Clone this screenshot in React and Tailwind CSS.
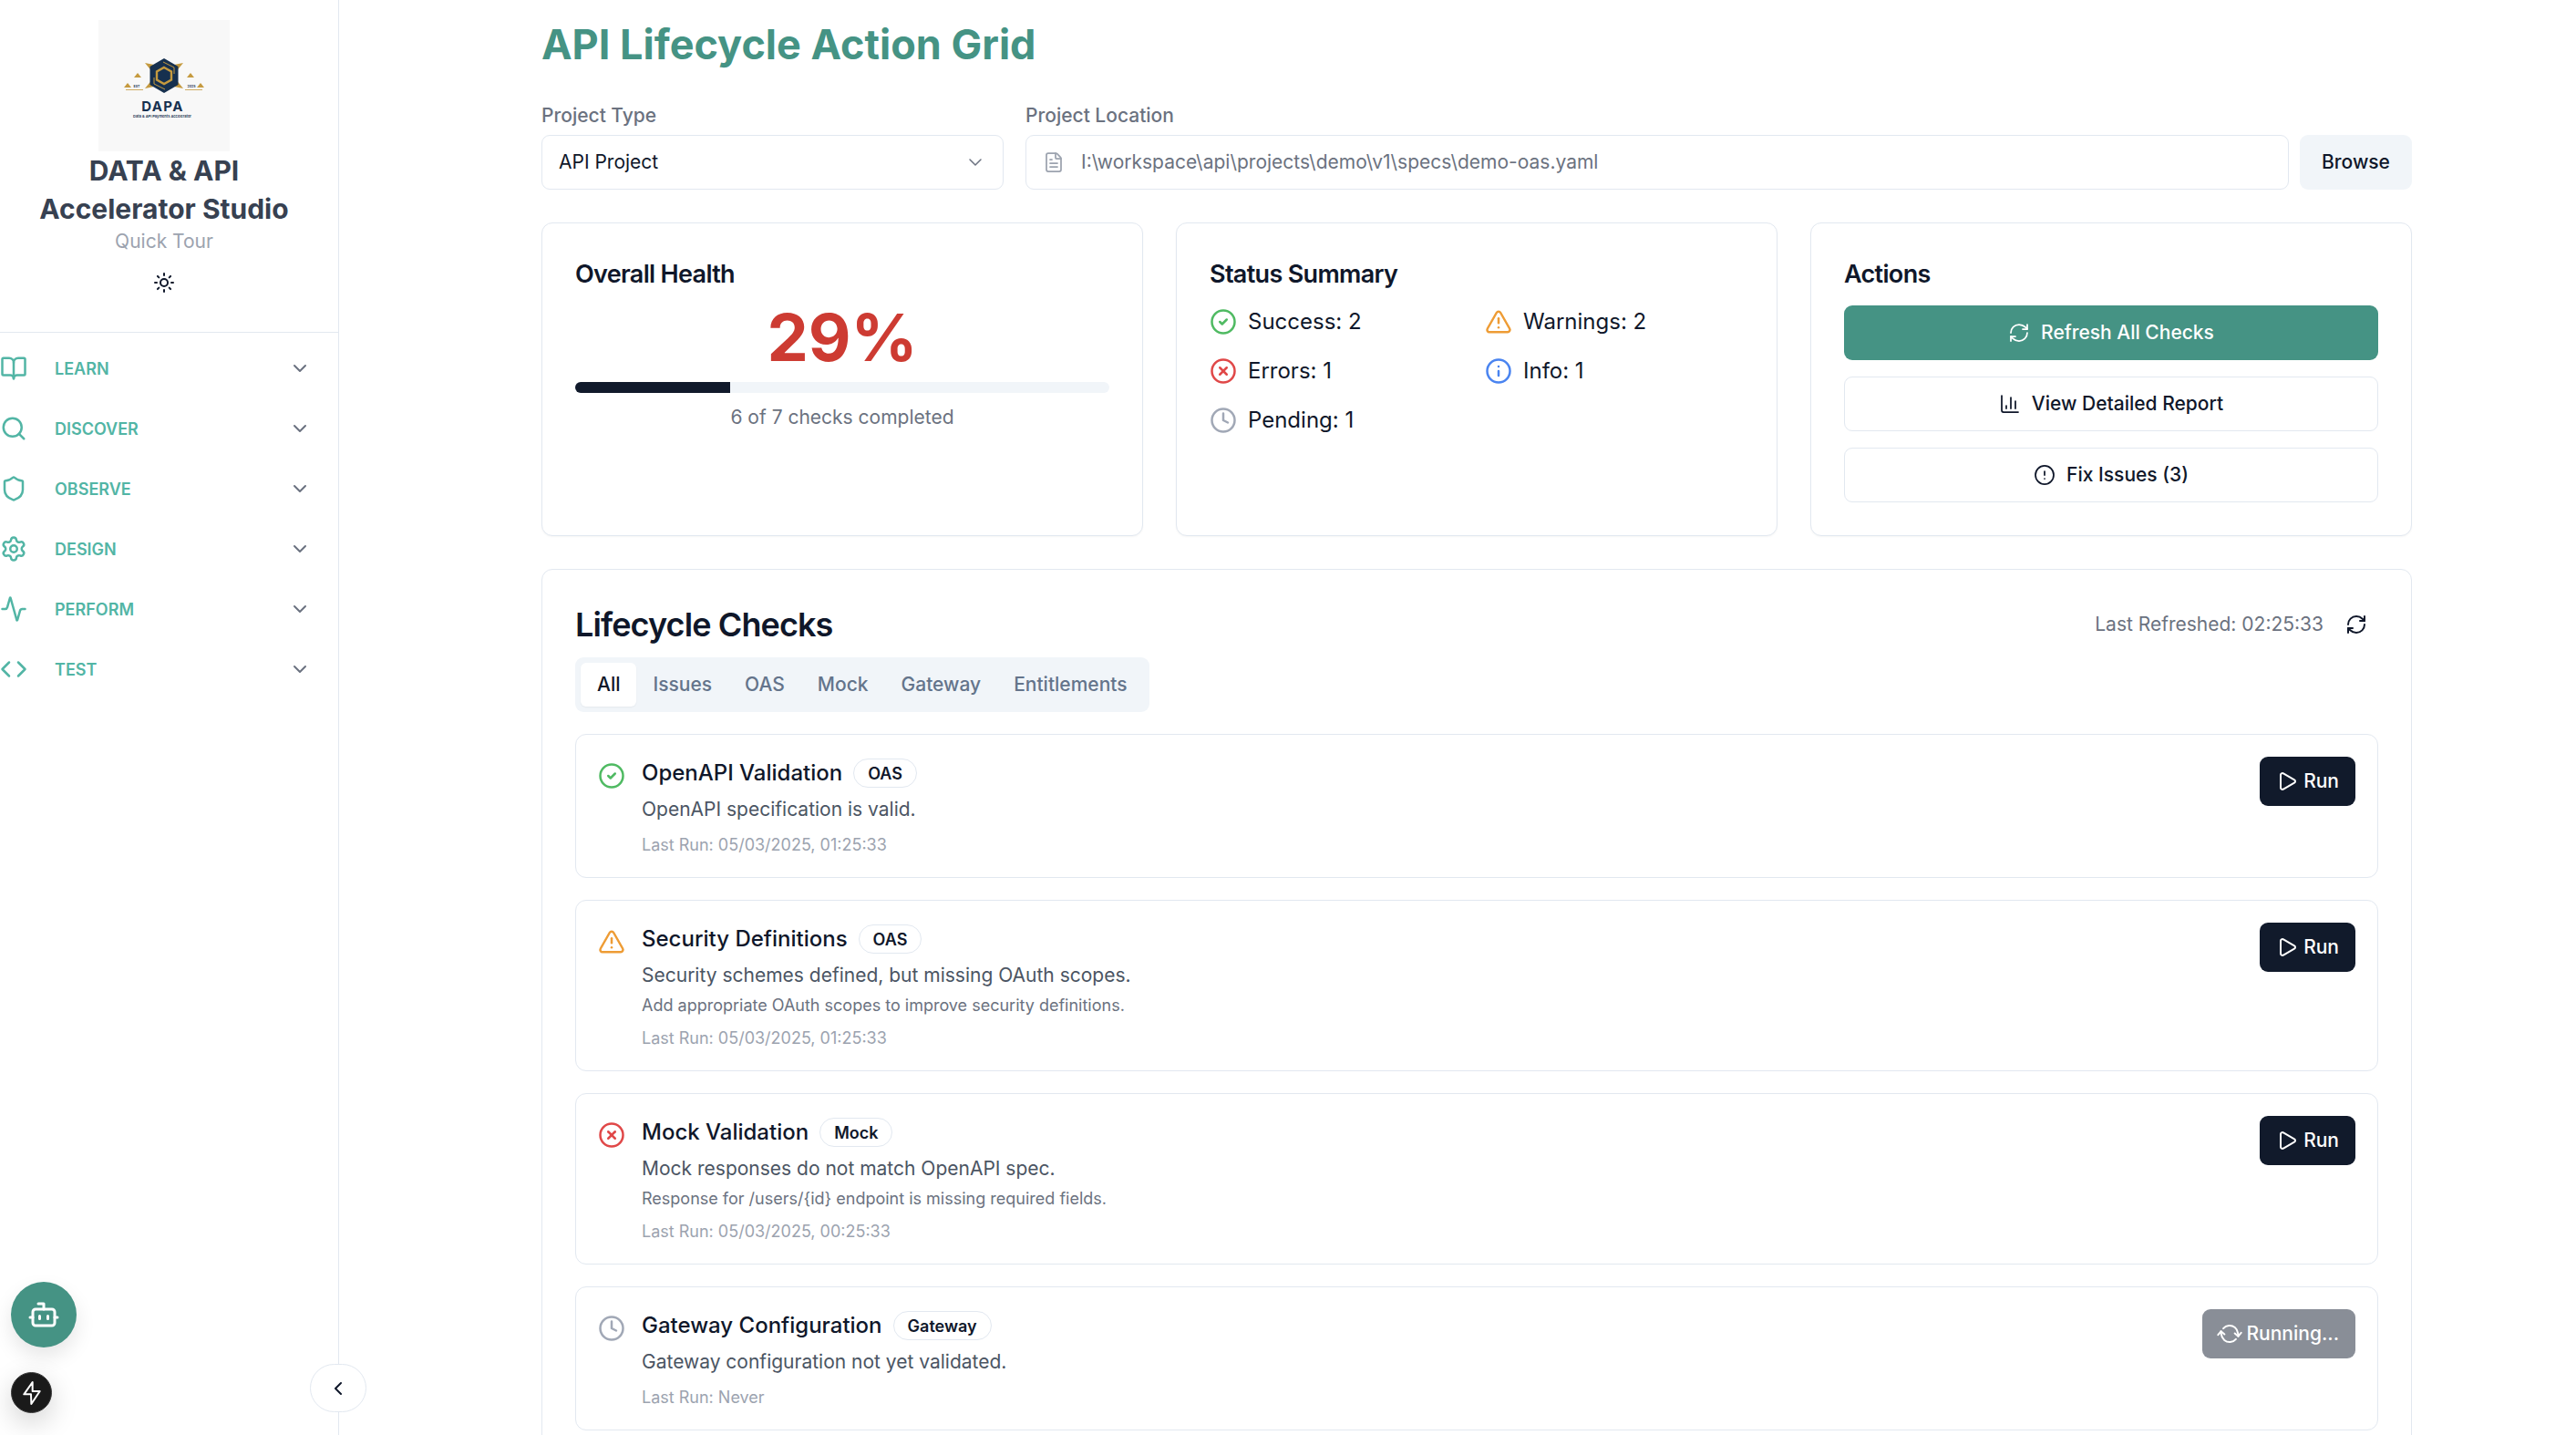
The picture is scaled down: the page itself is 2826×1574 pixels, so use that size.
import {
  Activity,
  BookOpen,
  Bot,
  ChartColumn,
  ChevronDown,
  ChevronLeft,
  CircleAlert,
  CircleCheck,
  CircleX,
  Clock,
  Code,
  FileText,
  Info,
  Play,
  RefreshCw,
  Search,
  Settings,
  Shield,
  Sun,
  TriangleAlert,
} from 'lucide-react';

const navItems = [
  { label: 'LEARN', icon: BookOpen },
  { label: 'DISCOVER', icon: Search },
  { label: 'OBSERVE', icon: Shield },
  { label: 'DESIGN', icon: Settings },
  { label: 'PERFORM', icon: Activity },
  { label: 'TEST', icon: Code },
];

const checks = [
  {
    title: 'OpenAPI Validation',
    tag: 'OAS',
    icon: CircleCheck,
    color: 'text-[#4fba62]',
    message: 'OpenAPI specification is valid.',
    lastRun: 'Last Run: 05/03/2025, 01:25:33',
  },
  {
    title: 'Security Definitions',
    tag: 'OAS',
    icon: TriangleAlert,
    color: 'text-[#ee9c35]',
    message: 'Security schemes defined, but missing OAuth scopes.',
    detail: 'Add appropriate OAuth scopes to improve security definitions.',
    lastRun: 'Last Run: 05/03/2025, 01:25:33',
  },
  {
    title: 'Mock Validation',
    tag: 'Mock',
    icon: CircleX,
    color: 'text-[#e04848]',
    message: 'Mock responses do not match OpenAPI spec.',
    detail: 'Response for /users/{id} endpoint is missing required fields.',
    lastRun: 'Last Run: 05/03/2025, 00:25:33',
  },
  {
    title: 'Gateway Configuration',
    tag: 'Gateway',
    icon: Clock,
    color: 'text-[#a1a8b6]',
    message: 'Gateway configuration not yet validated.',
    lastRun: 'Last Run: Never',
    running: true,
  },
];

const tabs = ['All', 'Issues', 'OAS', 'Mock', 'Gateway', 'Entitlements'];

const Logo = () => (
  <svg viewBox="0 0 144 144" className="w-[144px] h-[144px] bg-[#f8f8f8] shrink-0">
    <g fill="#c59a3f">
      <polygon points="51,47 66,50 60,58" />
      <polygon points="93,47 78,50 84,58" />
      <polygon points="51,75 60,64 66,72" />
      <polygon points="93,75 84,64 78,72" />
      <polygon points="43,58 47,63 39,63" />
      <polygon points="101,58 105,63 97,63" />
      <polygon points="32,69 36,74 28,74" />
      <polygon points="112,69 116,74 108,74" />
      <rect x="30" y="76" width="19" height="0.8" />
      <rect x="95" y="76" width="19" height="0.8" />
    </g>
    <polygon points="72,42 87.5,51 87.5,71 72,80 56.5,71 56.5,51" fill="#16304f" />
    <polygon points="72,52 80,56.5 80,65.5 72,70 64,65.5 64,56.5" fill="none" stroke="#c59a3f" strokeWidth="2.4" />
    <path d="M71 46 L83 52 V59 M73 76 L61 70 V63" fill="none" stroke="#c59a3f" strokeWidth="1" />
    <text x="42" y="73.5" fontSize="3.6" fontWeight="600" textAnchor="middle" fill="#16304f">EST</text>
    <text x="102" y="73.5" fontSize="3.6" fontWeight="600" textAnchor="middle" fill="#16304f">2025</text>
    <text x="70.5" y="99.5" fontSize="15" fontWeight="700" letterSpacing="1.4" textAnchor="middle" fill="#16304f">DAPA</text>
    <text x="70" y="106.5" fontSize="4" fontWeight="600" textAnchor="middle" fill="#16304f">Data &amp; API Payments Accelerator</text>
  </svg>
);

const Sidebar = () => (
  <aside className="w-[372px] shrink-0 h-full border-r border-[#e2e8f0] bg-white">
    <div className="h-[365px] flex flex-col items-center pt-[22px] pr-[11px] border-b border-[#e2e8f0]">
      <Logo />
      <h2 className="text-[30px] leading-[42px] font-bold text-[#374151] text-center">
        DATA &amp; API
        <br />
        Accelerator Studio
      </h2>
      <p className="text-[21px] leading-[31.5px] text-[#9ca3af] -mt-[1px]">Quick Tour</p>
      <Sun size={24} className="text-[#0f172a] mt-[17px]" />
    </div>
    <nav className="pt-[6px]">
      {navItems.map((item) => (
        <div key={item.label} className="h-[66px] flex items-center pr-[30px]">
          <item.icon size={30} className="text-[#52b5a5] shrink-0" />
          <span className="ml-[30px] flex-1 text-[18px] font-semibold text-[#52b5a5]">{item.label}</span>
          <ChevronDown size={24} className="text-[#6b7280]" />
        </div>
      ))}
    </nav>
  </aside>
);

const Card = ({ title, children }) => (
  <div className="h-[344px] rounded-[12px] border border-[#e2e8f0] bg-white p-[36px] shadow-[0_1px_2px_rgba(0,0,0,0.04)]">
    <h3 className="text-[27px] leading-[40.5px] font-semibold tracking-tight text-[#0f172a]">{title}</h3>
    {children}
  </div>
);

const StatusRow = ({ icon: Icon, color, text }) => (
  <div className="flex items-center gap-[12px] h-[36px]">
    <Icon size={30} className={color} />
    <span className="text-[24px] text-[#0f172a]">{text}</span>
  </div>
);

const CheckRow = ({ check }) => (
  <div className="rounded-[12px] border border-[#e2e8f0] bg-white px-[24px] pt-[24px] pb-[22.5px] flex items-start gap-[18px]">
    <check.icon size={30} className={`${check.color} shrink-0 mt-[6px]`} />
    <div className="flex-1">
      <div className="flex items-center gap-[12px] h-[36px]">
        <span className="text-[24px] font-medium text-[#0f172a]">{check.title}</span>
        <span className="h-[32px] flex items-center rounded-full border border-[#e2e8f0] px-[15px] text-[18px] font-semibold text-[#0f172a]">
          {check.tag}
        </span>
      </div>
      <p className="mt-[6px] text-[21px] leading-[31.5px] text-[#4b5563]">{check.message}</p>
      {check.detail && <p className="mt-[3px] text-[18px] leading-[27px] text-[#6b7280]">{check.detail}</p>}
      <p className="mt-[9px] text-[18px] leading-[27px] text-[#9ca3af]">{check.lastRun}</p>
    </div>
    {check.running ? (
      <button className="h-[54px] px-[18px] flex items-center gap-[6px] rounded-[9px] bg-[#898e97] text-white text-[21px] font-medium">
        <RefreshCw size={24} className="rotate-[40deg]" />
        Running...
      </button>
    ) : (
      <button className="h-[54px] px-[18px] flex items-center gap-[6px] rounded-[9px] bg-[#111a2b] text-white text-[21px] font-medium">
        <Play size={24} />
        Run
      </button>
    )}
  </div>
);

export default function App() {
  return (
    <div className="relative h-screen flex overflow-hidden bg-white font-['Inter',sans-serif]">
      <Sidebar />

      <main className="flex-1 min-w-0 pl-[222px] pr-[180px] pt-[22px]">
        <h1 className="text-[45px] leading-[54px] font-bold text-[#459384]">API Lifecycle Action Grid</h1>

        <div className="mt-[35px] flex gap-[24px]">
          <div className="w-[507px] shrink-0">
            <label className="block text-[21px] leading-[31.5px] font-medium text-[#6b7280] mb-[5.5px]">Project Type</label>
            <div className="h-[60px] flex items-center justify-between rounded-[9px] border border-[#e2e8f0] px-[18px] text-[21px] text-[#0f172a]">
              API Project
              <ChevronDown size={24} className="text-[#6b7280]" strokeWidth={1.5} />
            </div>
          </div>
          <div className="flex-1">
            <label className="block text-[21px] leading-[31.5px] font-medium text-[#6b7280] mb-[5.5px]">Project Location</label>
            <div className="flex gap-[12px]">
              <div className="flex-1 h-[60px] flex items-center gap-[18px] rounded-[9px] border border-[#e2e8f0] px-[18px] text-[21px] text-[#6b7280]">
                <FileText size={24} className="text-[#9ca3af]" strokeWidth={1.75} />
                I:\workspace\api\projects\demo\v1\specs\demo-oas.yaml
              </div>
              <button className="w-[123px] h-[60px] rounded-[9px] bg-[#f1f5f9] text-[21px] font-medium text-[#0f172a]">Browse</button>
            </div>
          </div>
        </div>

        <div className="mt-[36px] grid grid-cols-3 gap-[36px]">
          <Card title="Overall Health">
            <div className="mt-[12px] text-center text-[72px] leading-[72px] font-bold text-[#cd3b32]">29%</div>
            <div className="mt-[13px] h-[12px] rounded-full bg-[#f1f5f9] overflow-hidden">
              <div className="h-full w-[29%] bg-[#111a2b]" />
            </div>
            <p className="mt-[11px] text-center text-[21px] leading-[31.5px] text-[#6b7280]">6 of 7 checks completed</p>
          </Card>

          <Card title="Status Summary">
            <div className="mt-[13px] grid grid-cols-2 gap-x-[18px] gap-y-[18px]">
              <StatusRow icon={CircleCheck} color="text-[#4fba62]" text="Success: 2" />
              <StatusRow icon={TriangleAlert} color="text-[#ee9c35]" text="Warnings: 2" />
              <StatusRow icon={CircleX} color="text-[#e04848]" text="Errors: 1" />
              <StatusRow icon={Info} color="text-[#4a84f0]" text="Info: 1" />
              <StatusRow icon={Clock} color="text-[#a1a8b6]" text="Pending: 1" />
            </div>
          </Card>

          <Card title="Actions">
            <div className="mt-[13.5px] flex flex-col gap-[18px]">
              <button className="h-[60px] flex items-center justify-center gap-[12px] rounded-[9px] bg-[#459384] text-white text-[21px] font-medium">
                <RefreshCw size={24} strokeWidth={1.75} />
                Refresh All Checks
              </button>
              <button className="h-[60px] flex items-center justify-center gap-[12px] rounded-[9px] border border-[#e2e8f0] text-[#0f172a] text-[21px] font-medium">
                <ChartColumn size={24} strokeWidth={1.75} />
                View Detailed Report
              </button>
              <button className="h-[60px] flex items-center justify-center gap-[12px] rounded-[9px] border border-[#e2e8f0] text-[#0f172a] text-[21px] font-medium">
                <CircleAlert size={24} strokeWidth={1.75} />
                Fix Issues (3)
              </button>
            </div>
          </Card>
        </div>

        <section className="mt-[36px] rounded-[12px] border border-[#e2e8f0] bg-white p-[36px]">
          <div className="flex items-center justify-between">
            <h2 className="text-[36px] leading-[48px] font-semibold tracking-tight text-[#0f172a]">Lifecycle Checks</h2>
            <div className="flex items-center gap-[12px]">
              <span className="text-[21px] text-[#6b7280]">Last Refreshed: 02:25:33</span>
              <button className="px-[12px]">
                <RefreshCw size={24} className="text-[#0f172a]" />
              </button>
            </div>
          </div>

          <div className="mt-[12px] inline-flex h-[60px] items-center rounded-[9px] bg-[#f1f5f9] p-[6px] align-top">
            {tabs.map((tab, i) => (
              <span
                key={tab}
                className={
                  i === 0
                    ? 'h-[48px] flex items-center px-[18px] rounded-[6px] bg-white text-[21px] font-medium text-[#0f172a] shadow-[0_1px_2px_rgba(0,0,0,0.05)]'
                    : 'h-[48px] flex items-center px-[18px] text-[21px] font-medium text-[#64748b]'
                }
              >
                {tab}
              </span>
            ))}
          </div>

          <div className="mt-[24px] flex flex-col gap-[24px]">
            {checks.map((check) => (
              <CheckRow key={check.title} check={check} />
            ))}
          </div>
        </section>
      </main>

      <button className="absolute left-[12px] top-[1406px] w-[72px] h-[72px] rounded-full bg-[#459384] flex items-center justify-center text-white shadow-[0_10px_22px_rgba(0,0,0,0.1)]">
        <Bot size={36} />
      </button>
      <button className="absolute left-[12px] top-[1505px] w-[45px] h-[45px] rounded-full bg-[#1a1a1a] border border-[#3a3a3a] flex items-center justify-center shadow-[0_10px_30px_rgba(0,0,0,0.18)]">
        <svg viewBox="0 0 60 84" className="w-[20px] h-[28px]" fill="none" stroke="white" strokeWidth="6" strokeLinejoin="round">
          <polygon points="32,6 4,46 27,46 28,78 56,36 32,36" />
        </svg>
      </button>
      <button className="absolute left-[340px] top-[1496px] w-[62px] h-[53px] rounded-full bg-white border border-[#e2e8f0] flex items-center justify-center text-[#0f172a]">
        <ChevronLeft size={24} />
      </button>
    </div>
  );
}
